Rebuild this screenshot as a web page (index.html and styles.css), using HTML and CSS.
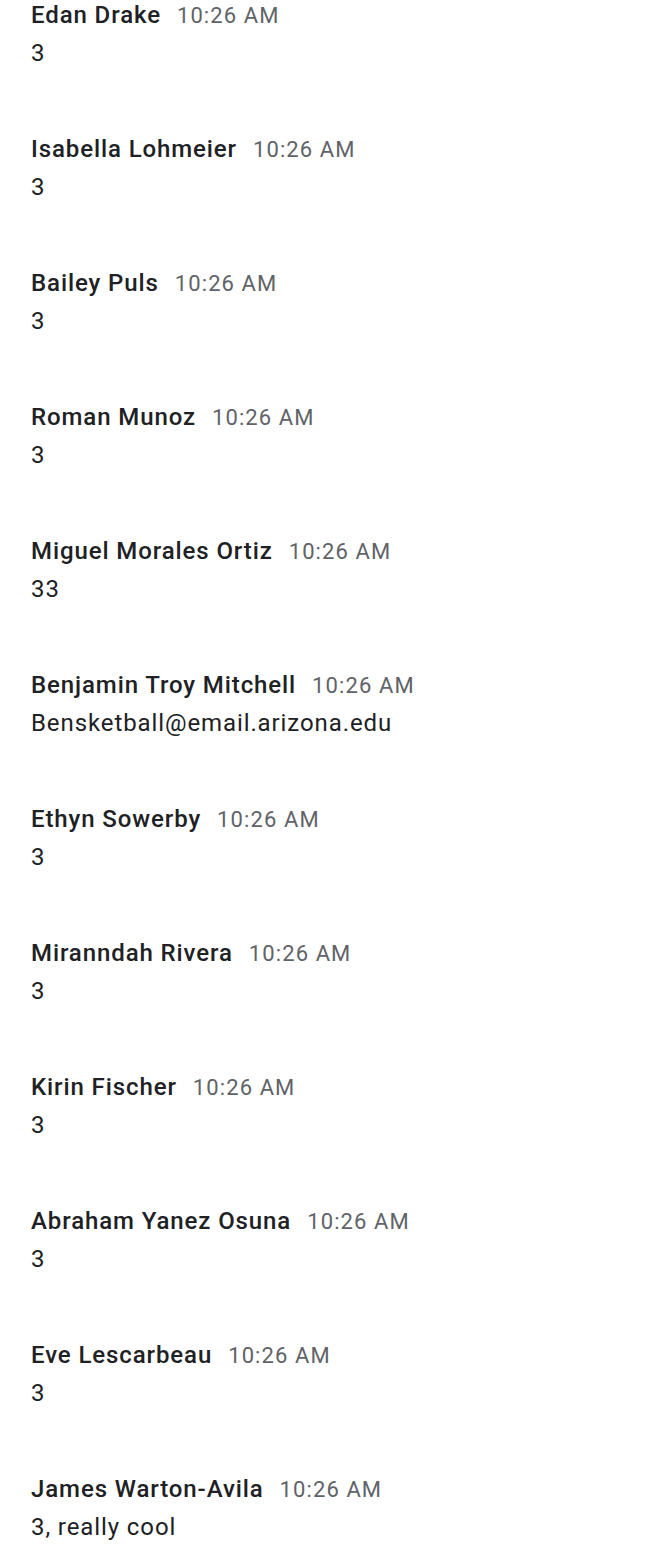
FILE: index.html
```html
<!DOCTYPE html>
<html>
<head>
<meta charset="utf-8">
<link rel="stylesheet" href="styles.css">
</head>
<body>
<div class="chat">
  <div class="msg"><div class="head"><span class="name">Edan Drake</span><span class="time">10:26 AM</span></div><div class="text">3</div></div>
  <div class="msg"><div class="head"><span class="name">Isabella Lohmeier</span><span class="time">10:26 AM</span></div><div class="text">3</div></div>
  <div class="msg"><div class="head"><span class="name">Bailey Puls</span><span class="time">10:26 AM</span></div><div class="text">3</div></div>
  <div class="msg"><div class="head"><span class="name">Roman Munoz</span><span class="time">10:26 AM</span></div><div class="text">3</div></div>
  <div class="msg"><div class="head"><span class="name">Miguel Morales Ortiz</span><span class="time">10:26 AM</span></div><div class="text">33</div></div>
  <div class="msg"><div class="head"><span class="name">Benjamin Troy Mitchell</span><span class="time">10:26 AM</span></div><div class="text">Bensketball@email.arizona.edu</div></div>
  <div class="msg"><div class="head"><span class="name">Ethyn Sowerby</span><span class="time">10:26 AM</span></div><div class="text">3</div></div>
  <div class="msg"><div class="head"><span class="name">Miranndah Rivera</span><span class="time">10:26 AM</span></div><div class="text">3</div></div>
  <div class="msg"><div class="head"><span class="name">Kirin Fischer</span><span class="time">10:26 AM</span></div><div class="text">3</div></div>
  <div class="msg"><div class="head"><span class="name">Abraham Yanez Osuna</span><span class="time">10:26 AM</span></div><div class="text">3</div></div>
  <div class="msg"><div class="head"><span class="name">Eve Lescarbeau</span><span class="time">10:26 AM</span></div><div class="text">3</div></div>
  <div class="msg"><div class="head"><span class="name">James Warton-Avila</span><span class="time">10:26 AM</span></div><div class="text">3, really cool</div></div>
</div>
</body>
</html>
```
FILE: styles.css
```css
html, body {
  margin: 0;
  padding: 0;
  background: #ffffff;
}
body {
  font-family: Roboto, "Liberation Sans", sans-serif;
  overflow: hidden;
}
.chat {
  display: flex;
  flex-direction: column;
  padding-left: 31px;
  padding-top: 1px;
}
.msg {
  display: flex;
  flex-direction: column;
  gap: 10px;
  padding-bottom: 68px;
}
.head {
  display: flex;
  align-items: baseline;
  gap: 16px;
  line-height: 28px;
  height: 28px;
}
.name {
  font-size: 24px;
  font-weight: 500;
  letter-spacing: 0.9px;
  color: #202124;
}
.time {
  font-size: 22px;
  letter-spacing: 1.1px;
  color: #5f6368;
}
.text {
  font-size: 24px;
  line-height: 28px;
  letter-spacing: 0.9px;
  color: #202124;
}
```
